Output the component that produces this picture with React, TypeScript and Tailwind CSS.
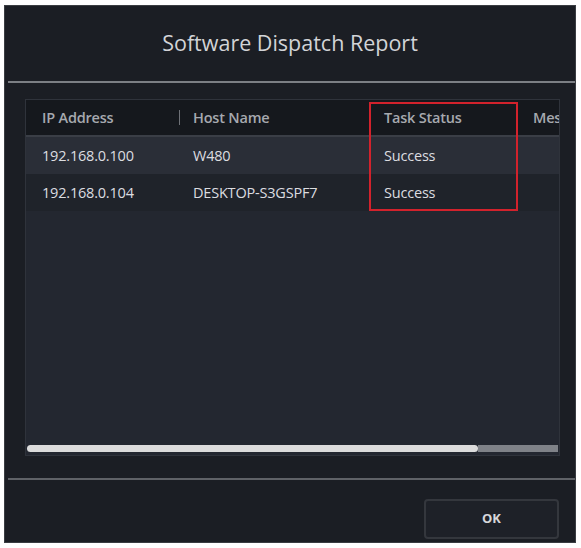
import React from 'react';

const rows = [
  { ip: '192.168.0.100', host: 'W480', status: 'Success', bg: 'bg-[#2a2e37]' },
  { ip: '192.168.0.104', host: 'DESKTOP-S3GSPF7', status: 'Success', bg: 'bg-[#1f232a]' },
];

export default function App() {
  return (
    <div className="w-[581px] h-[548px] bg-white pt-[5px] pl-[4px] font-['Open_Sans',sans-serif]">
      <div className="w-[572px] h-[538px] bg-[#1b1e24] border border-[#3a3d42] flex flex-col">
        {/* Title */}
        <div className="h-[75px] flex items-center justify-center">
          <h1 className="text-[21.5px] text-[#d2d4d7]">Software Dispatch Report</h1>
        </div>
        <div className="h-[2px] ml-[3px] bg-[#7c7f84]" />

        {/* Table */}
        <div className="mt-[16px] ml-[20px] w-[535px] h-[357px] bg-[#232730] border border-[#2f333b] flex flex-col relative">
          <div className="h-[37px] bg-[#15181d] flex items-center text-[14.5px] font-semibold text-[#a6a9af] border-b-2 border-[#3a3e46] tracking-[-0.2px]">
            <div className="w-[153px] pl-[16px]">IP Address</div>
            <div className="w-[191px] flex items-center">
              <span className="w-px h-[15px] bg-[#6e7177]" />
              <span className="pl-[13px]">Host Name</span>
            </div>
            <div className="w-[150px] pl-[14px]">Task Status</div>
            <div className="flex-1 flex items-center overflow-hidden whitespace-nowrap">
              <span className="w-[2px] h-[15px] bg-[#c9cbce]" />
              <span className="pl-[13px]">Message</span>
            </div>
          </div>
          {rows.map((r) => (
            <div key={r.ip} className={`h-[37px] ${r.bg} flex items-center text-[14.5px] text-[#dcdde0] tracking-[-0.2px]`}>
              <div className="w-[153px] pl-[16px]">{r.ip}</div>
              <div className="w-[191px] pl-[14px]">{r.host}</div>
              <div className="w-[150px] pl-[14px]">{r.status}</div>
            </div>
          ))}
          <div className="flex-1" />
          <div className="h-[11px] flex items-center px-[1px] mb-[1px]">
            <div className="w-[451px] h-[7px] rounded-full bg-[#dcdcdc]" />
            <div className="flex-1 h-[7px] bg-[#7f8288]" />
          </div>
          {/* highlight box */}
          <div className="absolute left-[343px] top-[2px] w-[149px] h-[109px] border-2 border-[#d2222c]" />
        </div>

        <div className="mt-[22px] h-[2px] ml-[3px] bg-[#5f6267]" />

        {/* Footer */}
        <div className="flex-1 flex justify-end items-start pt-[19px] pr-[16px]">
          <button className="w-[135px] h-[40px] rounded-[4px] border-2 border-[#34373d] bg-[#1e2128] text-[13px] font-bold text-[#d6d7da]">
            OK
          </button>
        </div>
      </div>
    </div>
  );
}
